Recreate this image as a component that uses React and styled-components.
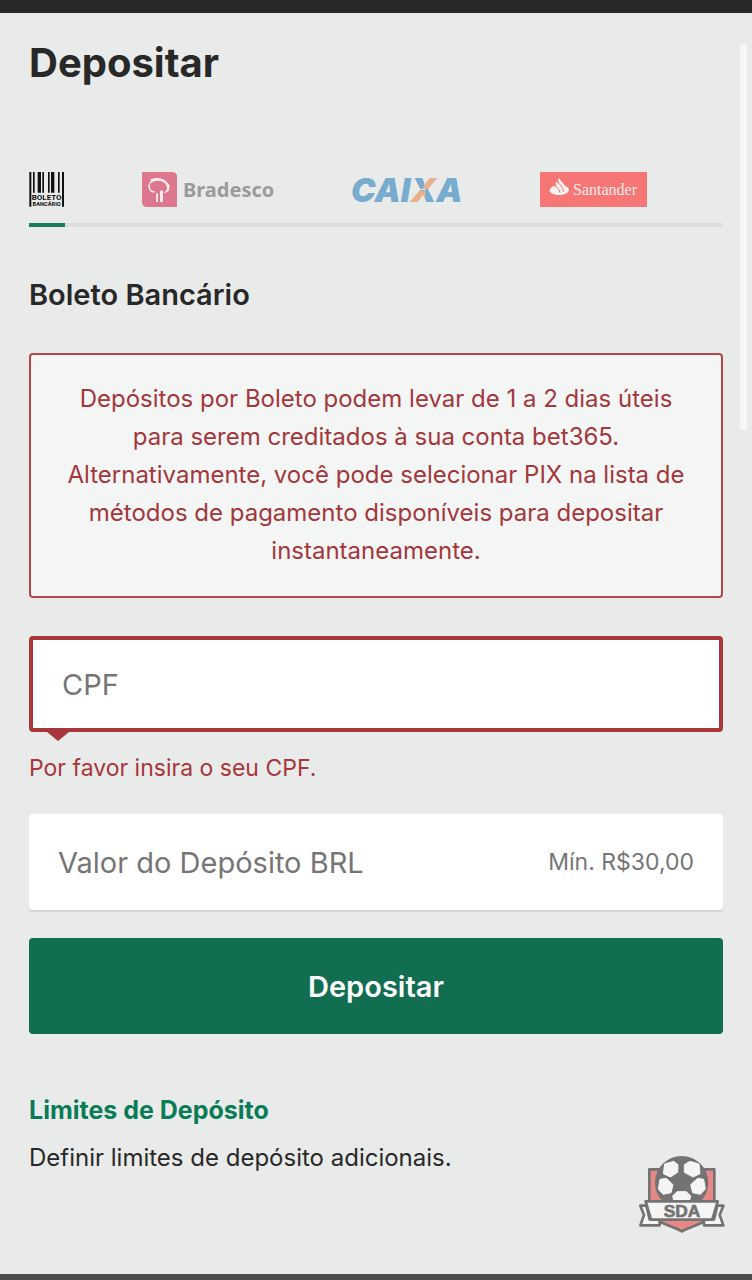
import { useState } from "react";
import styled, { createGlobalStyle } from "styled-components";

const GlobalStyle = createGlobalStyle`
  * {
    box-sizing: border-box;
  }
  body {
    margin: 0;
    background: #e9ebea;
    color: #282828;
    font-family: Inter, "Liberation Sans", sans-serif;
  }
  h1, h2, h3, p {
    margin: 0;
  }
`;

function BoletoLogo() {
  return (
    <svg width="36" height="36" viewBox="0 0 108 108" aria-hidden="true">
      <path
        fill="#111"
        d="M1 0h6v104h-6zM12 0h5v62h-5zM26 0h10v62h-10zM40 0h5v62h-5zM57 0h5v62h-5zM66 0h10v62h-10zM87 0h5v62h-5zM99 0h6v104h-6z"
      />
      <g
        fill="#111"
        fontFamily="Roboto, sans-serif"
        fontWeight="700"
        textAnchor="middle"
      >
        <text x="53" y="85" fontSize="24">BOLETO</text>
        <text x="53" y="103" fontSize="17">BANCÁRIO</text>
      </g>
    </svg>
  );
}

function BradescoLogo() {
  return (
    <svg width="133" height="36" viewBox="0 0 133 36" aria-hidden="true">
      <path fill="#dc778d" d="M0 0h30q5 0 5 5v30H5q-5 0-5-5z" />
      <path
        fill="#f8eaed"
        d="M7 13C8 5 22 4 26 12c3 5 1 9-5 9 4-2 5-5 3-8C21 7 11 8 7 13z"
      />
      <g fill="none" stroke="#f8eaed" strokeLinecap="round">
        <path strokeWidth="1.6" d="M9 8c7-3 14 0 18 6" />
        <path strokeWidth="1.6" d="M7 13c0 4 2 7 5 7" />
      </g>
      <path fill="#f8eaed" d="M14 22l2-1v9h-2zM18 19l3-1v12h-3z" />
      <text
        x="41"
        y="25"
        fill="#999b9b"
        fontFamily="'Noto Sans', sans-serif"
        fontWeight="700"
        fontSize="20"
      >
        Bradesco
      </text>
    </svg>
  );
}

function CaixaLogo() {
  return (
    <svg
      width="111"
      height="36"
      viewBox="0 0 111 36"
      overflow="visible"
      aria-hidden="true"
    >
      <defs>
        <pattern id="caixaX" patternUnits="userSpaceOnUse" width="120" height="36">
          <path fill="#78acce" d="M0 0h120v36H0z" />
          <path fill="#e8b18b" d="M76 0h25L84 17H71zM50 36V30L64 19H74L71 36z" />
          <path fill="#e9ebea" d="M62 17h12v1H62z" />
        </pattern>
      </defs>
      <text
        x="-1"
        y="30"
        fill="#78acce"
        fontFamily="Inter, sans-serif"
        fontWeight="900"
        fontStyle="italic"
        fontSize="33"
      >
        CAI<tspan fill="url(#caixaX)">X</tspan>A
      </text>
    </svg>
  );
}

function SantanderLogo() {
  return (
    <svg width="108" height="36" viewBox="0 0 108 36" aria-hidden="true">
      <path fill="#f67676" d="M0 0h107v35H0z" />
      <path
        fill="#fdf3f3"
        d="M14 14c-8 3-4 9 5 9s14-6 6-9c-1-3-5-5-6-8-2 3-1 4 0 7-1-1-2-2-2-4-2 2-2 4-1 6z"
      />
      <g fill="none" stroke="#f67676" strokeWidth="1">
        <path d="M15 12c1 4 5 5 5 9" />
        <path d="M18 9c1 4 6 6 5 11" />
      </g>
      <text
        x="33"
        y="23"
        fill="#fdeaea"
        fontFamily="'Liberation Serif', serif"
        fontSize="16"
      >
        Santander
      </text>
    </svg>
  );
}

function SdaLogo() {
  return (
    <svg width="86" height="77" viewBox="0 0 258 231" role="img" aria-label="SDA">
      <g stroke="#737373" strokeWidth="8" strokeLinejoin="round">
        <path
          fill="#e88787"
          d="M31 40H226V160C226 196 160 208 129 226C98 208 31 196 31 160Z"
        />
        <path fill="#f5f5f5" d="M22 149H4L15 177 4 208H62V190H32z" />
        <path fill="#f5f5f5" d="M235 149H253L242 177 253 208H195V190H225z" />
        <circle cx="128" cy="80" r="76" fill="#737373" />
      </g>
      <g fill="#f5f5f5" stroke="#f5f5f5" strokeWidth="3" strokeLinejoin="round">
        <path d="M77 24L104 16 117 26 116 49 94 63 73 53z" />
        <path d="M180 24L153 16 136 26 136 49 162 63 183 53z" />
        <path d="M63 70L82 67 102 86 96 110 72 115 58 99z" />
        <path d="M194 70L176 67 155 86 161 110 184 115 199 99z" />
        <path d="M114 107H142L155 120 150 140H106L101 120z" />
      </g>
      <path
        fill="#f5f5f5"
        stroke="#737373"
        strokeWidth="8"
        strokeLinejoin="round"
        d="M20 136H236L220 191H36z"
      />
      <text
        x="129"
        y="182"
        fill="#737373"
        stroke="#737373"
        strokeWidth="2"
        textAnchor="middle"
        fontFamily="'Liberation Sans', sans-serif"
        fontWeight="700"
        fontSize="52"
      >
        SDA
      </text>
    </svg>
  );
}

const methods = [
  { id: "boleto", name: "Boleto Bancário", Logo: BoletoLogo },
  { id: "bradesco", name: "Bradesco", Logo: BradescoLogo },
  { id: "caixa", name: "Caixa", Logo: CaixaLogo },
  { id: "santander", name: "Santander", Logo: SantanderLogo },
];

export default function App() {
  const [method, setMethod] = useState("boleto");
  const [cpf, setCpf] = useState("");
  const [amount, setAmount] = useState("");

  return (
    <>
      <GlobalStyle />
      <Page>
        <TopBar />
        <Content>
          <Title>Depositar</Title>
          <Methods>
            {methods.map(({ id, name, Logo }) => (
              <MethodButton
                key={id}
                type="button"
                aria-label={name}
                aria-pressed={method === id}
                $active={method === id}
                onClick={() => setMethod(id)}
              >
                <Logo />
              </MethodButton>
            ))}
          </Methods>
          <MethodTitle>Boleto Bancário</MethodTitle>
          <Notice>
            Depósitos por Boleto podem levar de 1 a 2 dias úteis para serem
            creditados à sua conta bet365. Alternativamente, você pode
            selecionar PIX na lista de métodos de pagamento disponíveis para
            depositar instantaneamente.
          </Notice>
          <form onSubmit={(e) => e.preventDefault()}>
            <Field $invalid>
              <Input
                aria-label="CPF"
                aria-invalid="true"
                aria-describedby="cpf-error"
                placeholder="CPF"
                value={cpf}
                onChange={(e) => setCpf(e.target.value)}
              />
            </Field>
            <FieldError id="cpf-error">Por favor insira o seu CPF.</FieldError>
            <Field>
              <Input
                aria-label="Valor do Depósito BRL"
                aria-describedby="amount-min"
                placeholder="Valor do Depósito BRL"
                value={amount}
                onChange={(e) => setAmount(e.target.value)}
              />
              <Hint id="amount-min">Mín. R$30,00</Hint>
            </Field>
            <SubmitButton type="submit">Depositar</SubmitButton>
          </form>
          <LimitsLink href="#limites">Limites de Depósito</LimitsLink>
          <LimitsText>Definir limites de depósito adicionais.</LimitsText>
        </Content>
        <BottomBar />
        <ScrollThumb />
        <Badge>
          <SdaLogo />
        </Badge>
      </Page>
    </>
  );
}

const Page = styled.div`
  position: relative;
  display: flex;
  flex-direction: column;
  min-height: 100vh;
`;

const TopBar = styled.header`
  height: 13px;
  background: #282828;
`;

const BottomBar = styled.footer`
  height: 6px;
  background: #4c4c4c;
`;

const Content = styled.main`
  flex: 1;
  padding: 26px 29px 96px;
`;

const Title = styled.h1`
  font-size: 40px;
  line-height: 48px;
  font-weight: 700;
`;

const Methods = styled.div`
  display: flex;
  gap: 77px;
  margin-top: 85px;
  box-shadow: inset 0 -4px #dcdddd;
`;

const MethodButton = styled.button`
  flex: none;
  padding: 0 0 15px;
  border: 0;
  border-bottom: 4px solid ${({ $active }) => ($active ? "#1d7a5a" : "transparent")};
  background: none;
  cursor: pointer;
  svg {
    display: block;
  }
`;

const MethodTitle = styled.h2`
  margin: 50px 0 40px;
  font-size: 29px;
  line-height: 36px;
  font-weight: 600;
`;

const Notice = styled.p`
  padding: 25px 28px 26px;
  border: 2px solid #b8474c;
  border-radius: 4px;
  background: #f4f6f6;
  color: #a3373b;
  font-size: 24px;
  line-height: 38px;
  text-align: center;
`;

const Field = styled.div`
  position: relative;
  display: flex;
  align-items: center;
  height: 96px;
  margin-top: ${({ $invalid }) => ($invalid ? "38px" : "30px")};
  padding: 0 29px;
  border: ${({ $invalid }) => ($invalid ? "4px solid #a8373b" : "0")};
  border-radius: 4px;
  background: #fff;
  box-shadow: ${({ $invalid }) => ($invalid ? "none" : "0 2px #d3d4d4")};
  &::after {
    content: ${({ $invalid }) => ($invalid ? '""' : "none")};
    position: absolute;
    top: calc(100% + 4px);
    left: 14px;
    border: 0 solid transparent;
    border-width: 9px 11px 0;
    border-top-color: #a8373b;
  }
`;

const Input = styled.input`
  flex: 1;
  min-width: 0;
  padding: 0;
  border: 0;
  outline: 0;
  background: none;
  color: #282828;
  font: inherit;
  font-size: 29px;
  &::placeholder {
    color: #757575;
    opacity: 1;
  }
`;

const Hint = styled.span`
  color: #757575;
  font-size: 23px;
`;

const FieldError = styled.p`
  margin-top: 20px;
  color: #a8373b;
  font-size: 23px;
  line-height: 32px;
`;

const SubmitButton = styled.button`
  display: block;
  width: 100%;
  height: 96px;
  margin-top: 28px;
  border: 0;
  border-radius: 4px;
  background: #126e51;
  color: #fff;
  font: inherit;
  font-size: 29px;
  font-weight: 600;
  cursor: pointer;
`;

const LimitsLink = styled.a`
  display: block;
  width: fit-content;
  margin-top: 60px;
  color: #0a7b57;
  font-size: 25px;
  line-height: 32px;
  font-weight: 700;
  text-decoration: none;
`;

const LimitsText = styled.p`
  margin-top: 16px;
  font-size: 24px;
  line-height: 32px;
`;

const ScrollThumb = styled.div`
  position: absolute;
  top: 44px;
  right: 5px;
  width: 7px;
  height: 386px;
  border-radius: 4px;
  background: #f6f7f7;
`;

const Badge = styled.div`
  position: absolute;
  right: 27px;
  bottom: 47px;
  svg {
    display: block;
  }
`;
